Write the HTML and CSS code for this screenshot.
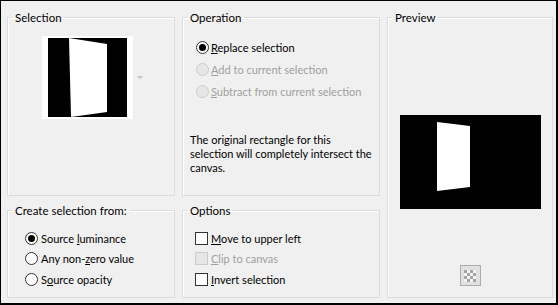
FILE: index.html
```html
<!DOCTYPE html>
<html lang="en">
<head>
    <meta charset="UTF-8">
    <title>Selection from Mask</title>
    <link rel="stylesheet" href="styles.css">
</head>
<body>
    <div class="dialog">
        <fieldset class="group sel">
            <legend>Selection</legend>
            <div class="thumbRow">
                <svg class="thumb" width="91" height="83" viewBox="0 0 91 83">
                    <rect x="0" y="0" width="91" height="83" fill="#fff"/>
                    <rect x="6" y="2" width="79" height="79" fill="#000"/>
                    <polygon points="27,2 65,8 65,76 29,81" fill="#fff"/>
                </svg>
                <span class="dropArrow"></span>
            </div>
        </fieldset>

        <fieldset class="group op">
            <legend>Operation</legend>
            <div class="inner">
                <div class="choice"><span class="radio on"></span><span><u>R</u>eplace selection</span></div>
                <div class="choice off"><span class="radio"></span><span><u>A</u>dd to current selection</span></div>
                <div class="choice off"><span class="radio"></span><span><u>S</u>ubtract from current selection</span></div>
            </div>
            <p class="note">The original rectangle for this<br>selection will completely intersect the<br>canvas.</p>
        </fieldset>

        <fieldset class="group preview">
            <legend>Preview</legend>
            <div class="previewBody">
                <svg class="previewPic" width="141" height="94" viewBox="0 0 141 94">
                    <rect x="0" y="0" width="141" height="94" fill="#000"/>
                    <polygon points="37,7 70,11 70,72 37,76" fill="#fff"/>
                </svg>
                <button class="checkerBtn">
                    <svg width="12" height="12" viewBox="0 0 12 12">
                        <rect x="0" y="0" width="12" height="12" fill="#f4f4f4"/>
                        <rect x="0" y="0" width="3" height="3" fill="#a4a4a4"/>
                        <rect x="6" y="0" width="3" height="3" fill="#a4a4a4"/>
                        <rect x="3" y="3" width="3" height="3" fill="#a4a4a4"/>
                        <rect x="9" y="3" width="3" height="3" fill="#a4a4a4"/>
                        <rect x="0" y="6" width="3" height="3" fill="#a4a4a4"/>
                        <rect x="6" y="6" width="3" height="3" fill="#a4a4a4"/>
                        <rect x="3" y="9" width="3" height="3" fill="#a4a4a4"/>
                        <rect x="9" y="9" width="3" height="3" fill="#a4a4a4"/>
                    </svg>
                </button>
            </div>
        </fieldset>

        <fieldset class="group from">
            <legend>Create selection from:</legend>
            <div class="inner">
                <div class="row"><span class="radio on"></span><span>Source <u>l</u>uminance</span></div>
                <div class="row"><span class="radio"></span><span>Any non-<u>z</u>ero value</span></div>
                <div class="row"><span class="radio"></span><span>S<u>o</u>urce opacity</span></div>
            </div>
        </fieldset>

        <fieldset class="group opts">
            <legend>Options</legend>
            <div class="inner">
                <div class="row"><span class="check"></span><span><u>M</u>ove to upper left</span></div>
                <div class="row off"><span class="check"></span><span><u>C</u>lip to canvas</span></div>
                <div class="row"><span class="check"></span><span><u>I</u>nvert selection</span></div>
            </div>
        </fieldset>
    </div>
</body>
</html>
```

FILE: styles.css
```css
* { box-sizing: border-box; }
body {
    margin: 0;
    font-family: Lato, "Liberation Sans", sans-serif;
    font-size: 11px;
    color: #000;
    background: #000;
}
.dialog {
    width: 558px;
    height: 305px;
    display: grid;
    grid-template-columns: 168px 198px 166px;
    grid-template-rows: 186px 95px;
    column-gap: 7px;
    row-gap: 7px;
    padding: 9px 3px 0 6px;
    border: 1px solid #000;
    border-width: 1px 2px 2px 1px;
    background: #f0f0f0;
}
.group {
    margin: 0;
    padding: 0;
    min-width: 0;
    border: 1px solid #dcdcdc;
    box-shadow: inset 1px 1px 0 #fff;
}
.group legend {
    margin-left: 4px;
    padding: 0 3px;
    font-size: 11.5px;
    line-height: 15px;
}
.sel { grid-column: 1; grid-row: 1; }
.op { grid-column: 2; grid-row: 1; }
.preview { grid-column: 3; grid-row: 1 / 3; }
.from { grid-column: 1; grid-row: 2; }
.opts { grid-column: 2; grid-row: 2; }

.thumbRow {
    display: flex;
    align-items: center;
    gap: 2px;
    margin: 11px 0 0 34px;
}
.thumb { display: block; }
.dropArrow {
    width: 0;
    height: 0;
    border-left: 3px solid transparent;
    border-right: 3px solid transparent;
    border-top: 3px solid #c4c4c4;
    margin-left: 2px;
}

.op .inner { padding: 11px 0 0 13px; }
.choice {
    display: flex;
    align-items: center;
    gap: 2px;
    height: 22px;
}
.off { color: #a0a0a0; }
.radio {
    width: 13px;
    height: 13px;
    border: 1px solid #333;
    border-radius: 50%;
    background: #fff;
    display: flex;
    align-items: center;
    justify-content: center;
    flex: none;
}
.radio.on::after {
    content: "";
    width: 7px;
    height: 7px;
    border-radius: 50%;
    background: #000;
}
.off .radio {
    border-color: #cccccc;
    background: #e6e6e6;
}
.note {
    margin: 31px 0 0 7px;
    line-height: 14px;
}

.from .inner { padding: 10px 0 0 17px; }
.opts .inner { padding: 10px 0 0 12px; }
.row {
    display: flex;
    align-items: center;
    gap: 3px;
    height: 20.5px;
}
.check {
    width: 13px;
    height: 13px;
    border: 1px solid #333;
    background: #fff;
    flex: none;
}
.off .check {
    border-color: #cccccc;
    background: #e6e6e6;
}

.previewBody {
    display: flex;
    flex-direction: column;
    align-items: center;
}
.previewPic {
    display: block;
    margin-top: 90px;
}
.checkerBtn {
    margin-top: 56px;
    width: 21px;
    height: 21px;
    padding: 0;
    border: 1px solid #adadad;
    background: #e1e1e1;
    display: flex;
    align-items: center;
    justify-content: center;
}
.checkerBtn svg { display: block; }
```
